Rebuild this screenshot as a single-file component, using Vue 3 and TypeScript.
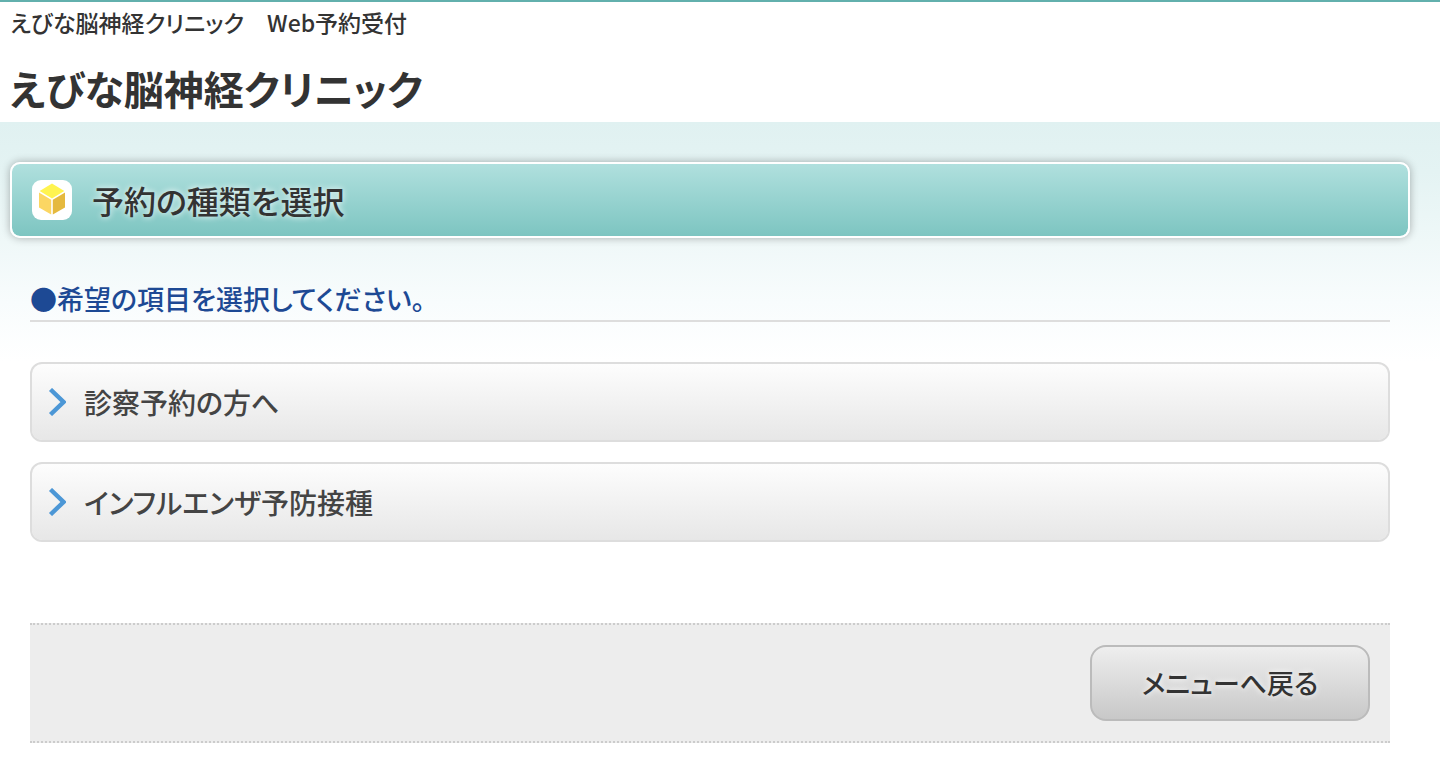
<script setup lang="ts">
interface ReservationType {
  id: string
  label: string
}

const clinicName: string = 'えびな脳神経クリニック'

const reservationTypes: ReservationType[] = [
  { id: 'consultation', label: '診察予約の方へ' },
  { id: 'influenza', label: 'インフルエンザ予防接種' },
]
</script>

<template>
  <div class="page">
    <header class="site-header">
      <p class="site-caption">{{ clinicName }}　Web予約受付</p>
      <h1 class="site-name">{{ clinicName }}</h1>
    </header>

    <main class="content">
      <h2 class="title-bar">
        <svg class="title-icon" viewBox="0 0 40 40" aria-hidden="true">
          <rect width="40" height="40" rx="9" fill="#fff" />
          <path d="M20 3.5 32.3 11 20 18.4 7.7 11Z" fill="#fff450" />
          <path d="M7 12.4 19.2 19.8V34.6L7 27.6Z" fill="#fbd663" />
          <path d="M33 12.4 20.8 19.8V34.6L33 27.6Z" fill="#e5b93e" />
        </svg>
        <span>予約の種類を選択</span>
      </h2>

      <section class="section">
        <h3 class="prompt">●希望の項目を選択してください。</h3>
        <ul class="choices">
          <li v-for="item in reservationTypes" :key="item.id">
            <a class="choice" :href="'#' + item.id">
              <svg class="chevron" viewBox="0 0 18 28" aria-hidden="true">
                <path d="M2.5 1.5 15.5 14 2.5 26.5" fill="none" stroke="#4c97d6" stroke-width="4.4" />
              </svg>
              <span>{{ item.label }}</span>
            </a>
          </li>
        </ul>
        <div class="actions">
          <button class="back" type="button">メニューへ戻る</button>
        </div>
      </section>
    </main>
  </div>
</template>

<style>
body {
  margin: 0;
  background: #fff;
}
</style>

<style scoped>
.page {
  border-top: 2px solid #62b0ad;
  color: #333;
  font-family: "Noto Sans CJK JP", sans-serif;
  font-feature-settings: "palt";
}

.site-header {
  padding: 4px 10px;
}

.site-caption {
  margin: 0;
  font-size: 23px;
  font-weight: 500;
  line-height: 32px;
}

.site-name {
  margin: 20px 0 0;
  font-size: 40px;
  font-weight: 700;
  line-height: 60px;
}

.content {
  padding: 40px 30px 20px 10px;
  background: linear-gradient(#e0f1f1 0, #e4f3f3 50px, #eff8f8 120px, #f8fcfd 180px, #fff 240px);
}

.title-bar {
  display: flex;
  align-items: center;
  gap: 20px;
  margin: 0;
  padding: 16px 20px;
  border: 2px solid #fff;
  border-radius: 10px;
  background: linear-gradient(#b0e0de, #7dc5c1);
  background-clip: padding-box;
  box-shadow: 0 0 8px rgba(0, 0, 0, 0.3);
  font-size: 32px;
  font-weight: 500;
  line-height: 40px;
  text-shadow: 0 0 6px #fff;
}

.title-icon {
  flex: none;
  width: 40px;
  height: 40px;
}

.section {
  margin: 40px 20px 0;
}

.prompt {
  margin: 0;
  border-bottom: 2px solid #ddd;
  color: #1d4994;
  font-size: 27px;
  font-weight: 500;
  line-height: 42px;
}

.choices {
  display: grid;
  gap: 20px;
  margin: 40px 0 81px;
  padding: 0;
  list-style: none;
}

.choice {
  display: flex;
  align-items: center;
  gap: 18px;
  padding: 18px 16px;
  border: 2px solid #ddd;
  border-radius: 12px;
  background: linear-gradient(#fdfdfd, #e7e7e7);
  background-clip: padding-box;
  color: #444;
  font-size: 28px;
  font-weight: 500;
  line-height: 40px;
  text-decoration: none;
}

.chevron {
  flex: none;
  width: 18px;
  height: 28px;
}

.actions {
  display: flex;
  justify-content: flex-end;
  padding: 20px;
  border-top: 2px dotted #ccc;
  border-bottom: 2px dotted #ccc;
  background: #ededed;
}

.back {
  min-width: 280px;
  padding: 16px 20px;
  border: 2px solid #bbb;
  border-radius: 16px;
  background: linear-gradient(#eee, #c8c8c8);
  color: #333;
  font-family: inherit;
  font-feature-settings: inherit;
  font-size: 27px;
  font-weight: 500;
  line-height: 40px;
  text-shadow: 0 0 6px #fff;
  cursor: pointer;
}
</style>
